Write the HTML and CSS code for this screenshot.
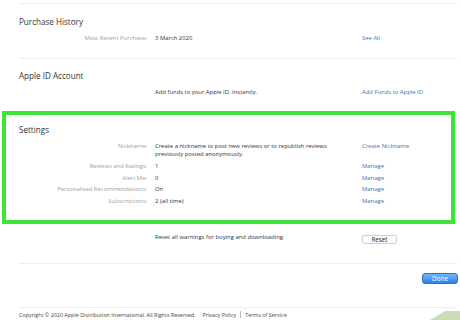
FILE: index.html
```html
<!DOCTYPE html>
<html lang="en">
<head>
  <meta charset="UTF-8" />
  <title>Account Settings</title>
  <link rel="stylesheet" href="styles.css">
</head>
<body>
  <main class="page">
    <hr class="rule rule-top">

    <section class="group group-first">
      <h2>Purchase History</h2>
      <div class="rows">
        <div class="row">
          <span class="label">Most Recent Purchase:</span>
          <span class="value">3 March 2020</span>
          <a class="link" href="#">See All</a>
        </div>
      </div>
    </section>

    <hr class="rule">

    <section class="group">
      <h2>Apple ID Account</h2>
      <div class="rows">
        <div class="row">
          <span class="label"></span>
          <span class="value">Add funds to your Apple ID. Instantly.</span>
          <a class="link" href="#">Add Funds to Apple ID</a>
        </div>
      </div>
    </section>

    <section class="group settings">
      <h2>Settings</h2>
      <div class="rows">
        <div class="row">
          <span class="label">Nickname:</span>
          <span class="value">Create a nickname to post new reviews or to republish reviews previously posted anonymously.</span>
          <a class="link" href="#">Create Nickname</a>
        </div>
        <div class="row">
          <span class="label">Reviews and Ratings:</span>
          <span class="value">1</span>
          <a class="link" href="#">Manage</a>
        </div>
        <div class="row">
          <span class="label">Alert Me:</span>
          <span class="value">0</span>
          <a class="link" href="#">Manage</a>
        </div>
        <div class="row">
          <span class="label">Personalised Recommendations:</span>
          <span class="value">On</span>
          <a class="link" href="#">Manage</a>
        </div>
        <div class="row">
          <span class="label">Subscriptions:</span>
          <span class="value">2 (all time)</span>
          <a class="link" href="#">Manage</a>
        </div>
      </div>
    </section>

    <div class="row reset-row">
      <span class="label"></span>
      <span class="value">Reset all warnings for buying and downloading.</span>
      <span><button class="btn-reset">Reset</button></span>
    </div>

    <hr class="rule rule-reset">

    <div class="actions">
      <button class="btn-done">Done</button>
    </div>

    <hr class="rule rule-footer">

    <footer>
      <span>Copyright &copy; 2020 Apple Distribution International. All Rights Reserved.</span>
      <a href="#">Privacy Policy</a>
      <span class="sep"></span>
      <a href="#">Terms of Service</a>
    </footer>
  </main>

  <svg class="corner" width="30" height="10" viewBox="0 0 30 10">
    <polygon points="0,10 15,1 30,1 30,10" fill="#c9dcb6" />
  </svg>
</body>
</html>
```

FILE: styles.css
```css
* {
  box-sizing: border-box;
  margin: 0;
  padding: 0;
}
html, body {
  width: 460px;
  height: 320px;
  overflow: hidden;
  background: #fff;
}
body {
  font-family: 'Open Sans', 'Liberation Sans', sans-serif;
  font-size: 5.9px;
  color: #333;
  position: relative;
}
.page {
  padding: 3px 2px 0 19px;
}
.rule {
  border: none;
  border-top: 1px solid #eeeeee;
  margin-right: 1px;
}
.group h2 {
  font-size: 8.1px;
  font-weight: 400;
  line-height: 10px;
  color: #333;
  margin-bottom: 7px;
}
.group-first {
  margin-top: 13px;
  margin-bottom: 16px;
}
.group-first + .rule + .group {
  margin-top: 12px;
}
.rows {
  display: flex;
  flex-direction: column;
  gap: 3.3px;
}
.row {
  display: grid;
  grid-template-columns: 128px 199px auto;
  column-gap: 8px;
  line-height: 8.4px;
}
.label {
  text-align: right;
  color: #a0a0a0;
}
.value {
  color: #333;
}
.link {
  color: #4570b0;
  text-decoration: none;
}
.settings {
  margin: 14px 3px 0 -17px;
  border: 4px solid #3ce53a;
  padding: 10px 0 15px 13px;
}
.reset-row {
  margin-top: 9px;
}
.btn-reset {
  margin-top: 2px;
  width: 35px;
  height: 9px;
  font-family: inherit;
  font-size: 6.2px;
  line-height: 7px;
  color: #222;
  background: #fff;
  border: 1px solid #cfcfcf;
  border-radius: 2px;
}
.rule-reset {
  margin-top: 18px;
}
.actions {
  display: flex;
  justify-content: flex-end;
  margin-top: 9px;
}
.btn-done {
  width: 36px;
  height: 11px;
  font-family: inherit;
  font-size: 6.4px;
  line-height: 9px;
  color: #fff;
  background: linear-gradient(#72b6f7, #2f82e6);
  border: 1px solid #2b6fcb;
  border-radius: 3px;
}
.rule-footer {
  margin-top: 23px;
}
footer {
  display: flex;
  align-items: center;
  gap: 4px;
  margin-top: 3px;
  font-size: 5.4px;
  line-height: 8px;
  color: #444;
}
footer a {
  color: #444;
  text-decoration: none;
}
footer span:first-child {
  margin-right: 3px;
}
.sep {
  width: 1px;
  height: 7px;
  background: #bbb;
}
.corner {
  position: absolute;
  right: 0;
  bottom: 0;
}
```
